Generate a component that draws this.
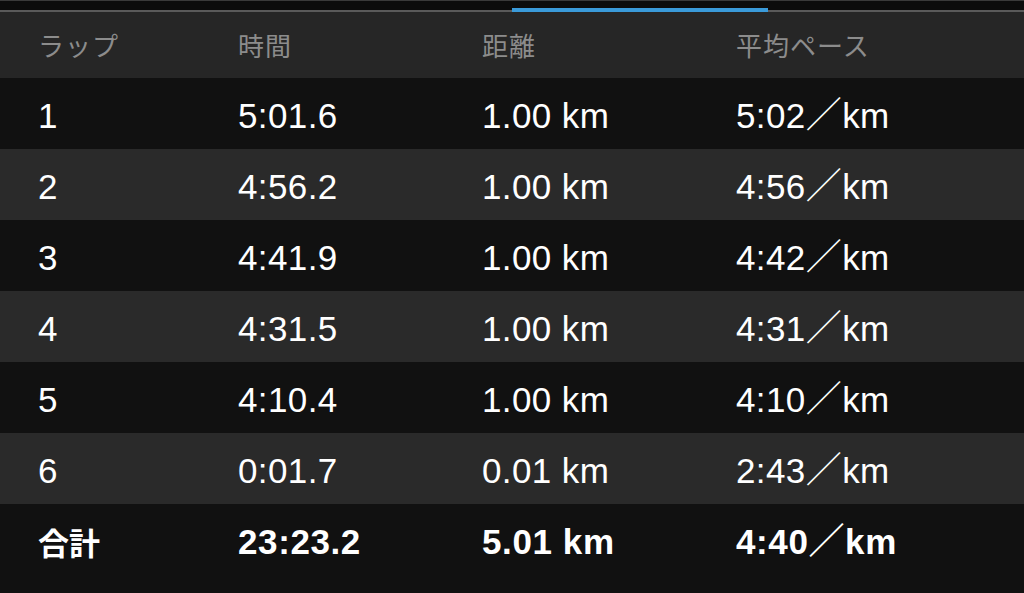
import React from 'react';

const laps = [
  { lap: '1', time: '5:01.6', dist: '1.00 km', pace: '5:02' },
  { lap: '2', time: '4:56.2', dist: '1.00 km', pace: '4:56' },
  { lap: '3', time: '4:41.9', dist: '1.00 km', pace: '4:42' },
  { lap: '4', time: '4:31.5', dist: '1.00 km', pace: '4:31' },
  { lap: '5', time: '4:10.4', dist: '1.00 km', pace: '4:10' },
  { lap: '6', time: '0:01.7', dist: '0.01 km', pace: '2:43' },
];

const font = { fontFamily: '"Liberation Sans", "Noto Sans CJK JP", sans-serif' };
const cols = 'grid grid-cols-[200px_244px_254px_1fr] pl-[38px] items-center';

function Pace({ value }: { value: string }) {
  return (
    <span>
      {value}
      <span className="font-[family-name:'Noto_Sans_CJK_JP',sans-serif] text-[36px] leading-[0px]">／</span>
      km
    </span>
  );
}

export default function App() {
  return (
    <div className="w-[1024px] h-[593px] bg-[#111111] overflow-hidden" style={font}>
      <div className="h-px bg-[#3a3a3a]" />
      <div className="relative h-[11px] bg-[#0c0c0c]">
        <div className="absolute left-0 right-0 bottom-0 h-[2px] bg-[#5a5a5a]" />
        <div className="absolute left-[512px] w-[256px] bottom-0 h-[4px] bg-[#3a9ad9]" />
      </div>
      <div className={`${cols} h-[66px] bg-[#262626] text-[26px] tracking-[1px] text-[#8c8c8c] font-[family-name:'Noto_Sans_CJK_JP',sans-serif]`}>
        <span className="-mt-[2px]">ラップ</span>
        <span className="-mt-[2px]">時間</span>
        <span className="-mt-[2px]">距離</span>
        <span className="-mt-[2px]">平均ペース</span>
      </div>
      {laps.map((r, i) => (
        <div
          key={r.lap}
          className={`${cols} h-[71px] pt-[5px] text-[35px] leading-[40px] tracking-[0.4px] text-white ${i % 2 === 0 ? 'bg-[#111111]' : 'bg-[#2a2a2a]'}`}
        >
          <span>{r.lap}</span>
          <span>{r.time}</span>
          <span>{r.dist}</span>
          <Pace value={r.pace} />
        </div>
      ))}
      <div className={`${cols} h-[71px] pt-[5px] text-[35px] leading-[40px] tracking-[0.6px] text-white font-bold bg-[#111111]`}>
        <span className="text-[31px] tracking-normal font-[family-name:'Noto_Sans_CJK_JP',sans-serif]">合計</span>
        <span>23:23.2</span>
        <span>5.01 km</span>
        <Pace value="4:40" />
      </div>
    </div>
  );
}
